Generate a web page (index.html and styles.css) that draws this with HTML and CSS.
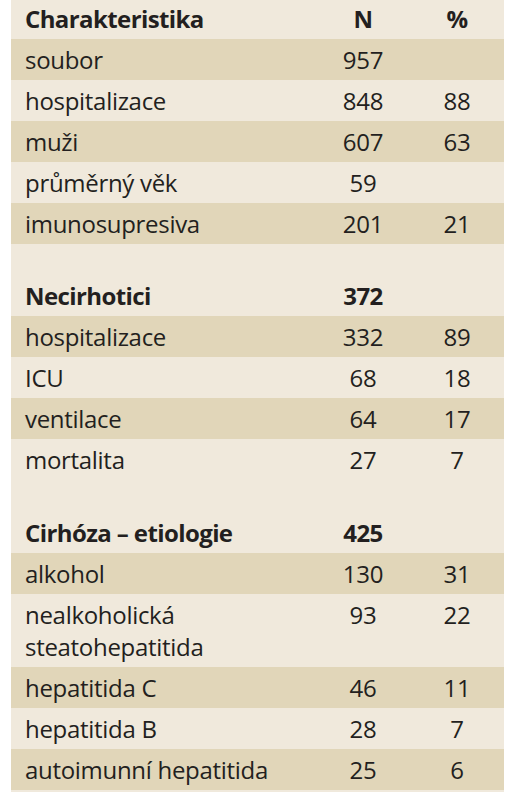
FILE: index.html
```html
<!DOCTYPE html>
<html lang="cs">
<head>
    <meta charset="UTF-8">
    <meta name="viewport" content="width=device-width, initial-scale=1.0">
    <title>Charakteristika souboru</title>
    <link rel="stylesheet" href="styles.css">
</head>
<body>
    <div class="panel">
        <table class="stats">
            <colgroup>
                <col class="col-label">
                <col class="col-num">
                <col class="col-pct">
            </colgroup>
            <tr class="head first">
                <td>Charakteristika</td>
                <td>N</td>
                <td>%</td>
            </tr>
            <tr class="dark"><td>soubor</td><td>957</td><td></td></tr>
            <tr><td>hospitalizace</td><td>848</td><td>88</td></tr>
            <tr class="dark"><td>muži</td><td>607</td><td>63</td></tr>
            <tr><td>průměrný věk</td><td>59</td><td></td></tr>
            <tr class="dark"><td>imunosupresiva</td><td>201</td><td>21</td></tr>

            <tr class="gap"><td colspan="3"></td></tr>
            <tr class="head">
                <td>Necirhotici</td>
                <td>372</td>
                <td></td>
            </tr>
            <tr class="dark"><td>hospitalizace</td><td>332</td><td>89</td></tr>
            <tr><td>ICU</td><td>68</td><td>18</td></tr>
            <tr class="dark"><td>ventilace</td><td>64</td><td>17</td></tr>
            <tr><td>mortalita</td><td>27</td><td>7</td></tr>

            <tr class="gap wide"><td colspan="3"></td></tr>
            <tr class="head">
                <td>Cirhóza – etiologie</td>
                <td>425</td>
                <td></td>
            </tr>
            <tr class="dark"><td>alkohol</td><td>130</td><td>31</td></tr>
            <tr><td>nealkoholická<br>steatohepatitida</td><td>93</td><td>22</td></tr>
            <tr class="dark"><td>hepatitida C</td><td>46</td><td>11</td></tr>
            <tr><td>hepatitida B</td><td>28</td><td>7</td></tr>
            <tr class="dark"><td>autoimunní hepatitida</td><td>25</td><td>6</td></tr>
        </table>
    </div>
</body>
</html>
```

FILE: styles.css
```css
body {
    margin: 0;
    background-color: #ffffff;
    font-family: "Open Sans", Lato, sans-serif;
    color: #231f20;
}

.panel {
    margin: 0 20px 0 11px;
    padding-bottom: 2px;
    background-color: #f0e9dc; /* svetly podklad */
}

.stats {
    width: 100%;
    border-collapse: collapse;
    table-layout: fixed;
    font-size: 24px;
    line-height: 32px;
    letter-spacing: -0.3px;
}

.col-label {
    width: 305px;
}

.col-num,
.col-pct {
    width: 94px;
}

.stats td {
    padding: 5px 0 4px;
    vertical-align: top;
    text-align: center;
    white-space: nowrap;
}

.stats td:first-child {
    text-align: left;
    padding-left: 14px;
}

.stats tr.dark {
    background-color: #e1d6b9; /* tmavsi pruh */
}

.stats tr.head td {
    font-weight: bold;
    letter-spacing: -0.6px;
}

.stats tr.first td {
    padding-top: 3px;
    padding-bottom: 4px;
}

.stats tr.gap td {
    padding: 0;
    height: 31px;
}

.stats tr.gap.wide td {
    height: 32px;
}
```
